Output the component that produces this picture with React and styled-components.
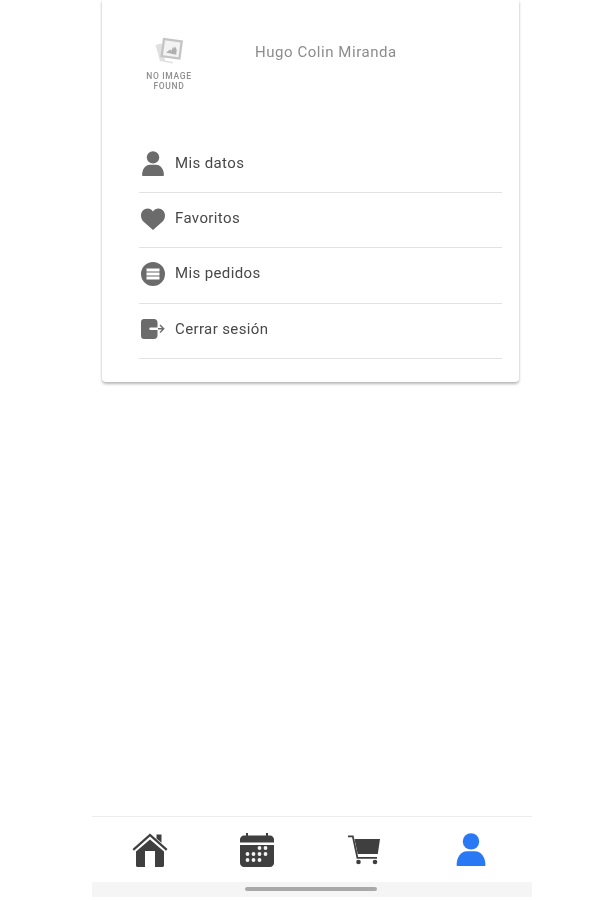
import React from "react";
import styled, { createGlobalStyle } from "styled-components";

const Global = createGlobalStyle`
  html, body { margin: 0; padding: 0; background: #fff; }
  body { font-family: Roboto, "Liberation Sans", sans-serif; overflow: hidden; }
`;

const Page = styled.div`
  width: 599px;
  height: 900px;
  display: flex;
  flex-direction: column;
  justify-content: space-between;
  filter: blur(0.5px);
`;

const Card = styled.section`
  box-sizing: border-box;
  width: 417px;
  height: 382px;
  margin-left: 102px;
  padding: 37px 17px 0 37px;
  background: #fff;
  border-radius: 0 0 4px 4px;
  box-shadow: 0 2px 3px rgba(0, 0, 0, 0.28), 0 0 3px rgba(0, 0, 0, 0.06);
`;

const Profile = styled.div`
  display: flex;
  align-items: flex-start;
  height: 101px;
`;

const Placeholder = styled.div`
  width: 60px;
  margin-right: 56px;
  display: flex;
  flex-direction: column;
  align-items: center;
`;

const PlaceholderText = styled.div`
  margin-top: 7px;
  font-size: 8.5px;
  line-height: 10px;
  font-weight: 500;
  letter-spacing: 0.7px;
  text-align: center;
  color: #8e8e8e;
`;

const Name = styled.div`
  margin-top: 5px;
  font-size: 15px;
  line-height: 20px;
  letter-spacing: 0.55px;
  color: #8c8c8c;
`;

const Row = styled.div`
  box-sizing: border-box;
  height: 55.2px;
  display: flex;
  align-items: center;
  gap: 10px;
  padding: 0 0 3px 2px;
  border-bottom: 1px solid #e2e2e2;
`;

const RowLabel = styled.span`
  font-size: 15px;
  letter-spacing: 0.38px;
  color: #484848;
  margin-top: -1px;
`;

const Icon = styled.svg`
  width: ${(p) => p.$w || 24}px;
  height: ${(p) => p.$h || 24}px;
  flex: none;
  fill: ${(p) => p.$color || "#6b6b6b"};
`;

const BottomArea = styled.footer`
  width: 440px;
  margin-left: 92px;
  margin-bottom: 3px;
`;

const Nav = styled.nav`
  height: 66px;
  box-sizing: border-box;
  border-top: 1px solid #ececec;
  display: grid;
  grid-template-columns: repeat(4, 107px);
  padding-left: 4px;
  align-items: center;
  justify-items: center;
`;

const HomeBar = styled.div`
  height: 15px;
  background: #f5f5f5;
  display: flex;
  align-items: center;
  justify-content: center;
`;

const Indicator = styled.div`
  width: 132px;
  height: 4px;
  margin: 0 2px 2px 0;
  border-radius: 2px;
  background: #a9a9a9;
`;

const UserPath = () => (
  <>
    <circle cx="15" cy="8.4" r="8.2" />
    <path d="M.6 32c0-8 4.400-13.800 10.400-13.800h8c6 0 10.400 5.800 10.400 13.800 0 .6-.4 1-1 1H1.600c-.6 0-1-.4-1-1z" />
  </>
);

const NoImage = () => (
  <Icon viewBox="0 0 28 27" $w={28} $h={27} $color="#c9c9c9">
    <path d="M.5 8l6-1.500 3.500 17 8 1.500-.3 1.400L5 24z" fill="#e0e0e0" />
    <path d="M8 .8l20 2.700-2.600 19.300-20-2.700z" fill="#c4c4c4" />
    <path d="M10 3.300l15.400 2.100-1.900 14.900L8 18.200z" fill="#f3f3f3" />
    <path d="M11 15.500l4-3 1.500 1.200 1.400-4 .9 2 1-2.500 2 3.600-.7 4.900z" fill="#b0b0b0" />
  </Icon>
);

const Heart = () => (
  <Icon viewBox="0 0 24 24" $h={24}>
    <path d="M12 23 3.200 15.200C.8 13 0 10.800 0 8.400 0 4.400 3 1.500 6.600 1.500c2.200 0 4.200 1 5.400 3 1.200-2 3.200-3 5.400-3C21 1.500 24 4.400 24 8.400c0 2.400-.8 4.600-3.200 6.800z" />
  </Icon>
);

const Orders = () => (
  <Icon viewBox="0 0 24 24">
    <path
      fillRule="evenodd"
      d="M12 0a12 12 0 1 0 0 24 12 12 0 0 0 0-24zM5.500 6.500h13v3h-13zm0 4h13v3h-13zm0 4h13v3h-13z"
    />
  </Icon>
);

const Logout = () => (
  <Icon viewBox="0 0 24 24">
    <path d="M3 2h10c2 0 3.500 1.500 3.500 3.500v5h-7a1.200 1.200 0 0 0 0 2.400h7v5.600c0 2-1.500 3.500-3.500 3.500H3c-1.700 0-3-1.300-3-3V5c0-1.700 1.300-3 3-3z" />
    <path d="M17 11h4l-2.500-2.500 1-1L23.700 11.700l-4.200 4.200-1-1 2.500-2.500h-4z" />
  </Icon>
);

const Home = () => (
  <Icon viewBox="0 0 36 34" $w={36} $h={34} $color="#3f3f3f">
    <path d="M24.500 1.500h5v8.300l-5-4.300z" />
    <path d="M18 .5 35.500 16l-1.500 1.700L18 3.600 2 17.700.5 16z" />
    <path d="M18 6.500 32 18.500V32.500c0 .8-.7 1.500-1.500 1.500H23V18h-10v16H5.500C4.700 34 4 33.300 4 32.500V18.500z" />
  </Icon>
);

const Calendar = () => (
  <Icon viewBox="0 0 34 34" $w={34} $h={34} $color="#3f3f3f">
    <path d="M6 0h2v2.500h18V0h2v2.500h2c2.200 0 4 1.800 4 4V9.500H0V6.500c0-2.200 1.800-4 4-4h2z" />
    <path d="M0 12h34V30c0 2.200-1.800 4-4 4H4c-2.200 0-4-1.800-4-4z" />
    {[[19.5, 15], [25.5, 15], [7.500, 21], [13.500, 21], [19.5, 21], [25.5, 21], [7.500, 27], [13.500, 27], [19.5, 27]].map(([x, y]) => (
      <circle key={`${x}-${y}`} cx={x} cy={y} r="1.900" fill="#f4f4f4" />
    ))}
  </Icon>
);

const Cart = () => (
  <Icon viewBox="0 0 32 30" $w={32} $h={30} $color="#3f3f3f">
    <path d="M0 .5h5.500l4.700 21.500H29v1.800H8.700L4.100 2.300H0z" />
    <path d="M6.500 4H32l-2.200 15H9.700z" />
    <circle cx="10.500" cy="27" r="2.300" />
    <circle cx="27" cy="27" r="2.300" />
  </Icon>
);

const items = [
  { label: "Mis datos", icon: <Icon viewBox="0 0 30 33" $h={25}><UserPath /></Icon> },
  { label: "Favoritos", icon: <Heart /> },
  { label: "Mis pedidos", icon: <Orders /> },
  { label: "Cerrar sesión", icon: <Logout /> },
];

export default function App() {
  return (
    <Page>
      <Global />
      <Card>
        <Profile>
          <Placeholder>
            <NoImage />
            <PlaceholderText>
              NO IMAGE
              <br />
              FOUND
            </PlaceholderText>
          </Placeholder>
          <Name>Hugo Colin Miranda</Name>
        </Profile>
        {items.map((item) => (
          <Row key={item.label}>
            {item.icon}
            <RowLabel>{item.label}</RowLabel>
          </Row>
        ))}
      </Card>
      <BottomArea>
        <Nav>
          <Home />
          <Calendar />
          <Cart />
          <Icon viewBox="0 0 30 33" $w={30} $h={33} $color="#2979f5">
            <UserPath />
          </Icon>
        </Nav>
        <HomeBar>
          <Indicator />
        </HomeBar>
      </BottomArea>
    </Page>
  );
}
